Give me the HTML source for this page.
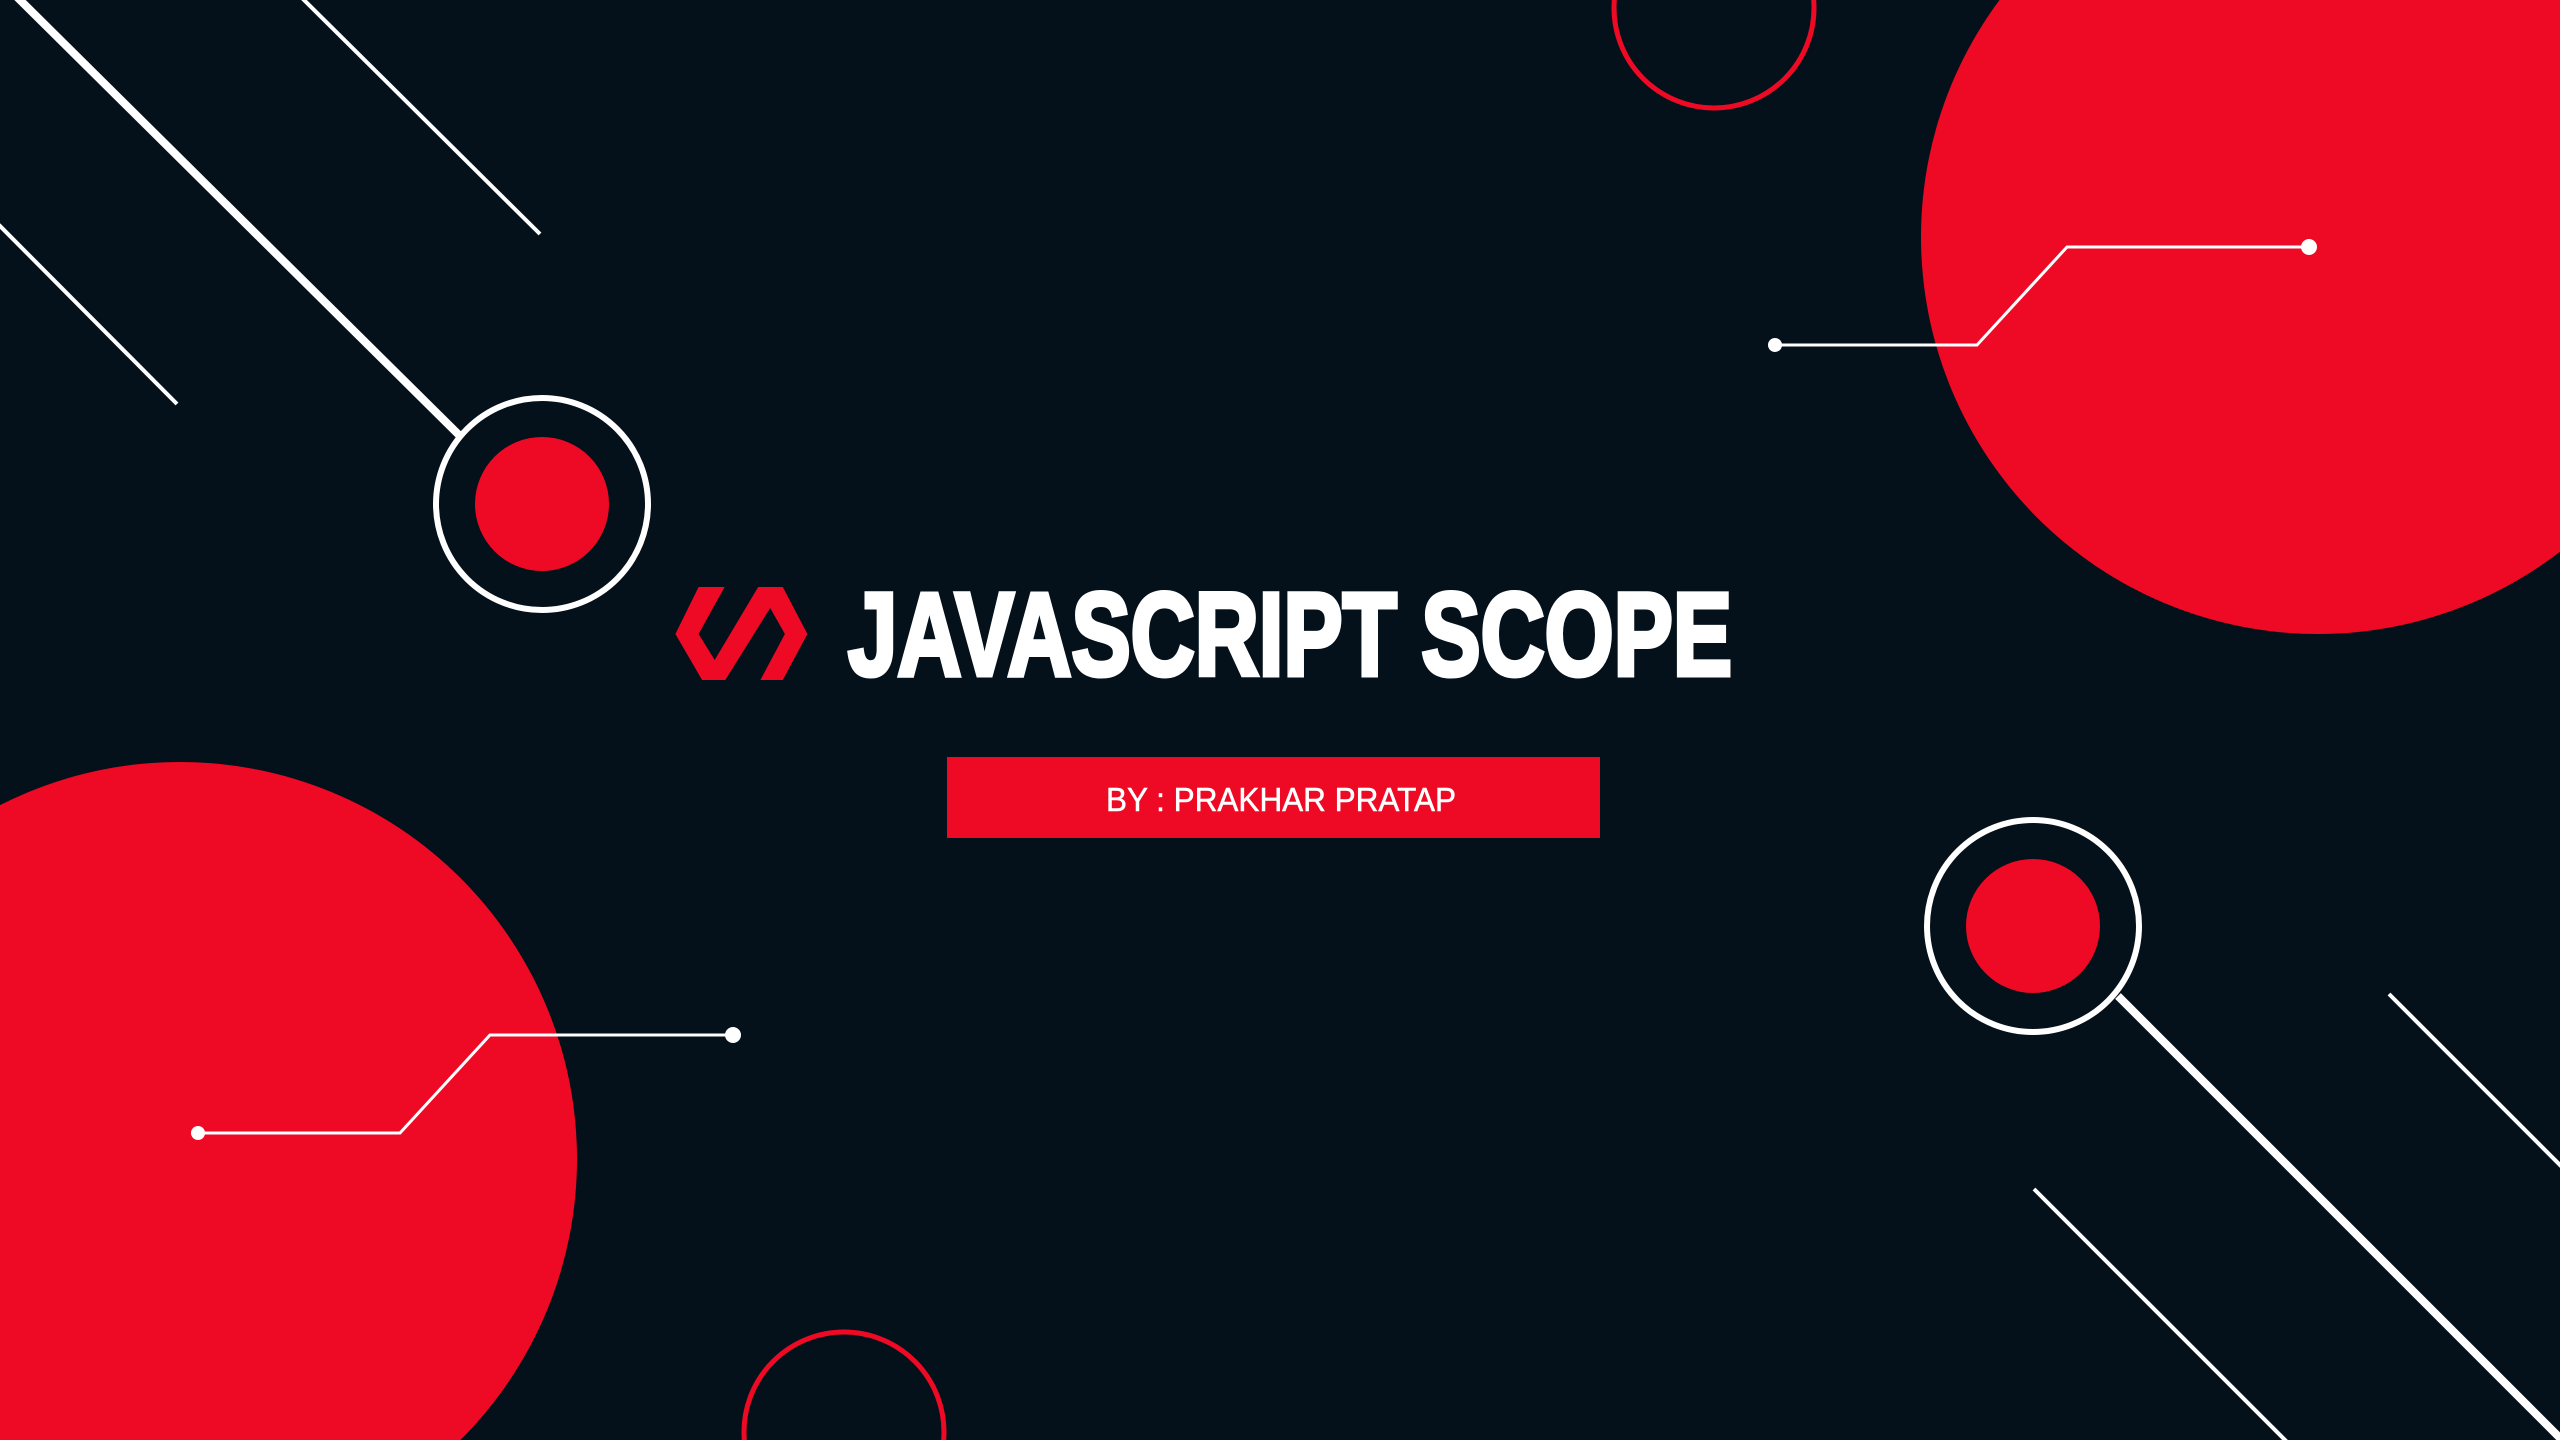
<!DOCTYPE html>
<html><head><meta charset="utf-8"><style>
html,body{margin:0;padding:0;background:#04111a;overflow:hidden;width:2560px;height:1440px}
svg{display:block;vertical-align:top}
</style></head><body>
<svg width="2560" height="1440" viewBox="0 0 2560 1440" xmlns="http://www.w3.org/2000/svg">
<rect width="2560" height="1440" fill="#04111a"/>
<circle cx="2318" cy="237" r="397" fill="#ee0a24"/>
<circle cx="180" cy="1159" r="397" fill="#ee0a24"/>
<circle cx="1714" cy="8" r="100" fill="none" stroke="#ee0a24" stroke-width="5"/>
<circle cx="844" cy="1432" r="100" fill="none" stroke="#ee0a24" stroke-width="5"/>
<g stroke="#fff" stroke-linecap="butt">
<line x1="16" y1="-4" x2="460" y2="436" stroke-width="8"/>
<line x1="302" y1="-2" x2="540" y2="234" stroke-width="4"/>
<line x1="-2" y1="224" x2="177" y2="404" stroke-width="4"/>
<line x1="2118" y1="996" x2="2564" y2="1442" stroke-width="8"/>
<line x1="2034" y1="1189" x2="2288" y2="1443" stroke-width="4"/>
<line x1="2389" y1="994" x2="2564" y2="1169" stroke-width="4"/>
</g>
<circle cx="542" cy="504" r="106" fill="#04111a" stroke="#fff" stroke-width="6"/>
<circle cx="542" cy="504" r="67" fill="#ee0a24"/>
<circle cx="2033" cy="926" r="106" fill="#04111a" stroke="#fff" stroke-width="6"/>
<circle cx="2033" cy="926" r="67" fill="#ee0a24"/>
<g fill="none" stroke="#fff" stroke-width="3">
<polyline points="1775,345 1977,345 2067,247 2309,247"/>
<polyline points="198,1133 400,1133 490,1035 733,1035"/>
</g>
<g fill="#fff">
<circle cx="1775" cy="345" r="7"/><circle cx="2309" cy="247" r="8"/>
<circle cx="198" cy="1133" r="7"/><circle cx="733" cy="1035" r="8"/>
</g>
<polygon fill="#ee0a24" points="698.6,587 724.6,587 698.6,634 714.7,660 758.2,587 782.8,587 807.4,634 782.8,680 760.4,680 784.9,634 770.2,608 725.3,680 702.1,680 675.4,634"/>
<text x="848" y="675" font-family="Liberation Sans, sans-serif" font-weight="bold" font-size="118" fill="#fff" stroke="#fff" stroke-width="5" stroke-linejoin="miter" textLength="884" lengthAdjust="spacingAndGlyphs">JAVASCRIPT SCOPE</text>
<rect x="947" y="757" width="653" height="81" fill="#ee0a24"/>
<text x="1106" y="811" font-family="Liberation Sans, sans-serif" font-size="33" fill="#fff" stroke="#fff" stroke-width="0.5" textLength="350" lengthAdjust="spacingAndGlyphs">BY : PRAKHAR PRATAP</text>
</svg>
</body></html>
